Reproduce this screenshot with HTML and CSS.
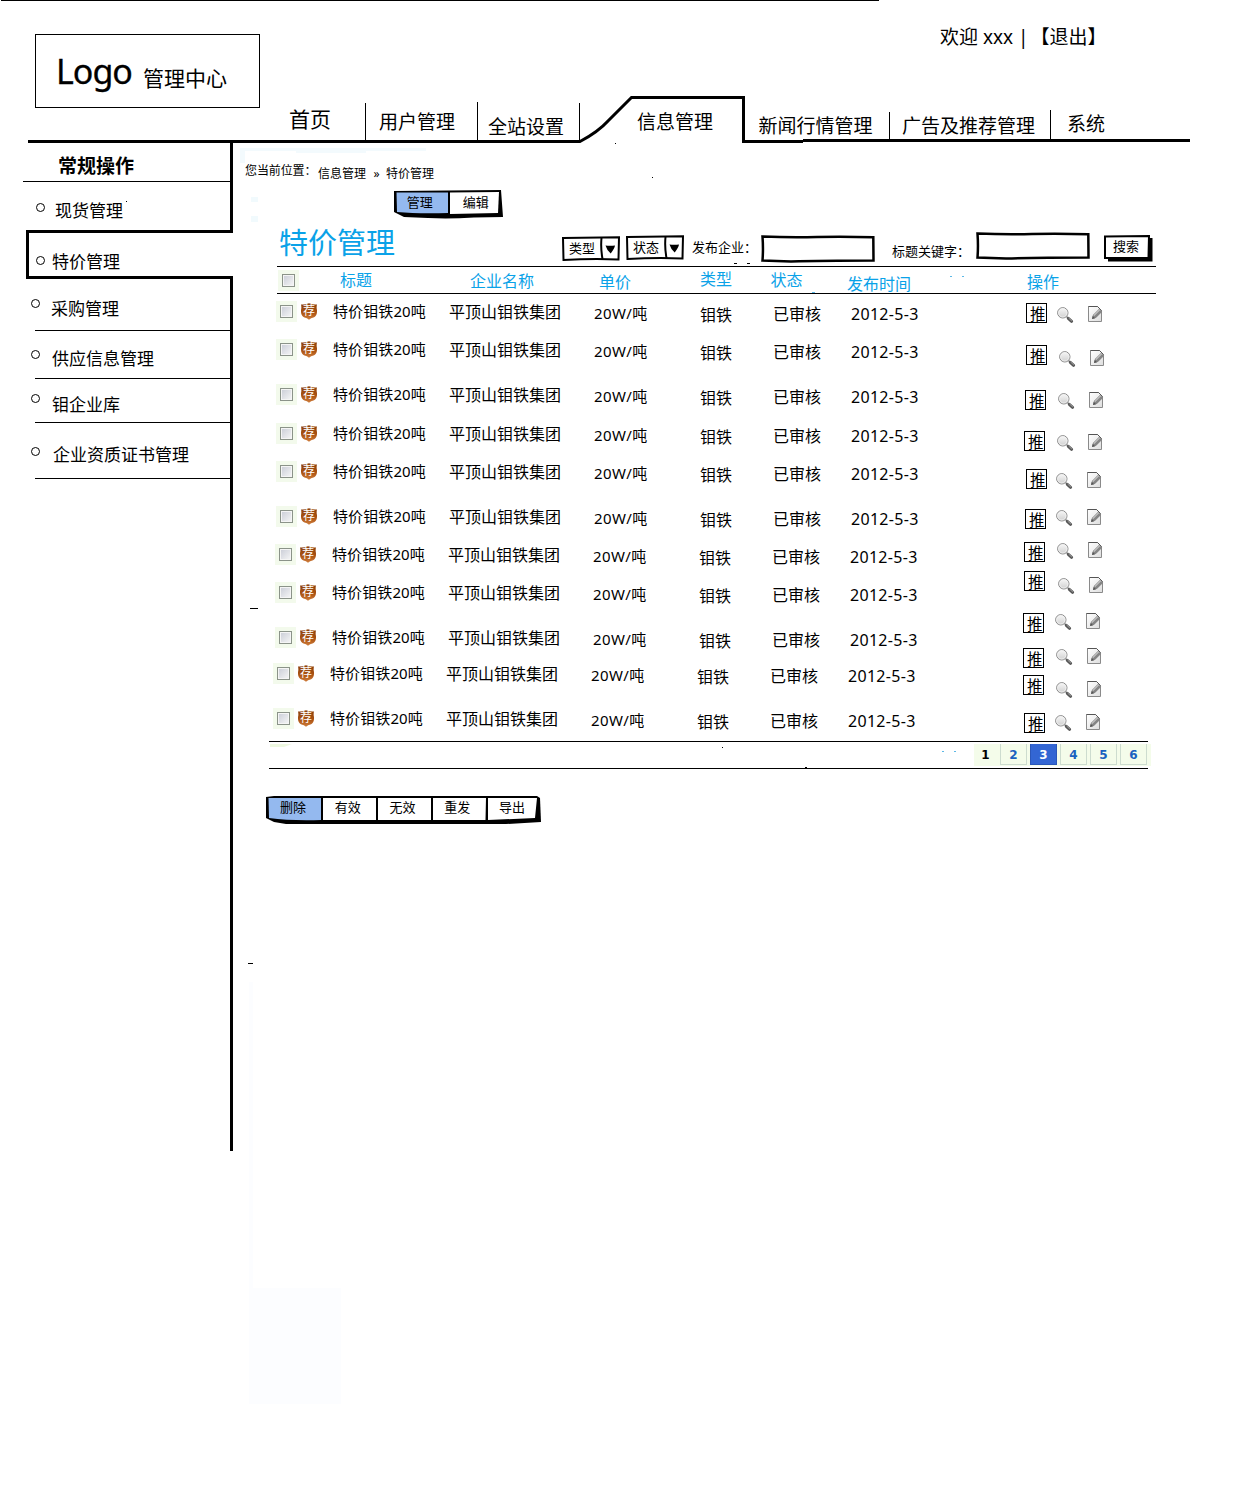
FILE: index.html
```html
<!DOCTYPE html>
<html lang="zh-CN">
<head>
<meta charset="utf-8">
<title>管理中心 - 特价管理</title>
<link rel="stylesheet" href="styles.css">
</head>
<body>
<svg class="defs" width="0" height="0" aria-hidden="true">
  <defs>
    <linearGradient id="lens" x1="0" y1="0" x2="0" y2="1"><stop offset="0" stop-color="#f8f8f8"/><stop offset="1" stop-color="#cfcfcf"/></linearGradient>
    <linearGradient id="paper" x1="0" y1="0" x2="1" y2="1"><stop offset="0" stop-color="#fff"/><stop offset="1" stop-color="#dedede"/></linearGradient>
    <linearGradient id="bronze" x1="0" y1="0" x2="0" y2="1"><stop offset="0" stop-color="#8a3f0c"/><stop offset=".6" stop-color="#ad5413"/><stop offset="1" stop-color="#d08040"/></linearGradient>
  </defs>
  <symbol id="view" viewBox="0 0 17 17">
    <path d="M9.5 9.500l2 2" stroke="#888" stroke-width="1.6"/>
    <path d="M11.3 11.300l3.300 3" stroke="#555" stroke-width="3" stroke-linecap="round"/>
    <path d="M11.8 11.200l2.800 2.600" stroke="#aaa" stroke-width=".9" stroke-linecap="round"/>
    <circle cx="5.800" cy="5.800" r="5.200" fill="url(#lens)" stroke="#8a8a8a"/>
    <circle cx="5.800" cy="5.800" r="4.200" fill="none" stroke="#f3f3f3" stroke-width=".8"/>
  </symbol>
  <symbol id="edit" viewBox="0 0 15 17">
    <path d="M.5 .5h9l4 4v11h-13z" fill="url(#paper)" stroke="#8a8a8a"/>
    <path d="M.5 .5h9l4 4" fill="none" stroke="#555"/>
    <path d="M4 13l.9-3.900 6.300-6.300 3 3-6.300 6.300z" fill="#858585"/>
    <path d="M5.800 9.700l6-6" stroke="#c5c5c5" stroke-width="1.2"/>
    <path d="M4 13l.7-3 2.400 2.300z" fill="#555"/>
  </symbol>
  <symbol id="shield" viewBox="0 0 16 17">
    <path d="M0 1.500Q4 2 8 .2Q12 2 16 1.500Q15.300 4 16 7Q16.400 13 12.500 14.600Q10 15.200 8 16.800Q6 15.200 3.500 14.600Q-.4 13 0 7Q.7 4 0 1.500z" fill="url(#bronze)"/>
  </symbol>
  <symbol id="dropdown" viewBox="0 0 58 25">
    <path d="M1 2L57 1.300L56.500 23.500Q30 22.500 1.500 24z" fill="#fff" stroke="#000" stroke-width="2"/>
    <path d="M39.500 2Q38.500 12 40.500 23" fill="none" stroke="#000" stroke-width="2"/>
    <path d="M43.500 9.500Q48 10.200 53 9.500Q52.500 12.500 48.700 17.500Q44.500 13.500 43.500 9.500z" fill="#000"/>
  </symbol>
  <symbol id="field" viewBox="0 0 114 28">
    <path d="M1.500 1.500Q30 2.800 56 2T112.300 2.300L112.500 25.500Q60 25.500 30 26.500L1.500 25.500Q2.400 14 1.500 1.500z" fill="#fff" stroke="#000" stroke-width="2.500"/>
  </symbol>
</svg>

<header class="header">
  <svg class="header-rule" width="1233" height="144" viewBox="0 0 1233 144" aria-hidden="true">
    <path d="M1 .5H879" stroke="#000"/>
    <path d="M28 141.500H580Q598 132 608 121Q618 111 631.500 97.500H743.500V141.500H803" fill="none" stroke="#000" stroke-width="3"/>
    <path d="M803 140.500H1190" stroke="#000" stroke-width="3"/>
  </svg>
  <div class="brand"><b class="brand-logo">Logo</b><span class="brand-name">管理中心</span></div>
  <div class="user">欢迎 xxx | <span>【退出】</span></div>
  <nav class="tabs">
    <a class="tab tab-home">首页</a>
    <a class="tab tab-users">用户管理</a>
    <a class="tab tab-site">全站设置</a>
    <a class="tab tab-info">信息管理</a>
    <a class="tab tab-news">新闻行情管理</a>
    <a class="tab tab-ads">广告及推荐管理</a>
    <a class="tab tab-system">系统</a>
  </nav>
</header>

<div class="body">
  <aside class="side">
    <h2 class="side-title">常规操作</h2>
    <ul class="menu">
      <li><i></i><a>现货管理</a></li>
      <li class="current"><i></i><a>特价管理</a></li>
      <li><i></i><a>采购管理</a></li>
      <li><i></i><a>供应信息管理</a></li>
      <li><i></i><a>钼企业库</a></li>
      <li><i></i><a>企业资质证书管理</a></li>
    </ul>
  </aside>

  <main class="main">
    <div class="crumbs"><span class="crumb-label">您当前位置：</span><span class="crumb">信息管理</span><span class="crumb-sep">»</span><span class="crumb">特价管理</span></div>

    <div class="group group-top">
      <svg class="frame" width="109" height="29" viewBox="0 0 109 29" aria-hidden="true">
        <path d="M0 1L107 0L109 27L80 27.500Q55 29 34 28L10 27L0 22z" fill="#000"/>
        <path d="M2.500 2.500H54V23Q25 24 3 22z" fill="#94b9ef"/>
        <path d="M56 2.500L105 2L104 23L56 24z" fill="#fff"/>
      </svg>
      <span class="cell">管理</span><span class="cell">编辑</span>
    </div>

    <div class="heading">
      <h1 class="title">特价管理</h1>
      <div class="select select-type"><svg class="frame" width="58" height="25"><use href="#dropdown"/></svg><span>类型</span></div>
      <div class="select select-state"><svg class="frame" width="58" height="25"><use href="#dropdown"/></svg><span>状态</span></div>
      <label class="label-company">发布企业：</label>
      <svg class="field field-company" width="114" height="28"><use href="#field"/></svg>
      <label class="label-keyword">标题关键字：</label>
      <svg class="field field-keyword" width="114" height="28"><use href="#field"/></svg>
      <button class="search"><svg class="frame" width="49" height="27" viewBox="0 0 49 27"><path d="M4 3H48.500V26.500H4z"/><path d="M1 1.500L45 1L44.500 23H1z" fill="#fff" stroke="#000" stroke-width="2"/></svg><span>搜索</span></button>
    </div>

    <div class="thead">
      <span class="check"></span><span>标题</span><span>企业名称</span><span>单价</span><span>类型</span><span>状态</span><span>发布时间</span><span>操作</span>
    </div>

    <div class="tbody">
      <div class="rows">
        <div class="row"><span class="check"></span><span class="badge"><svg class="frame" width="16" height="17"><use href="#shield"/></svg><em>荐</em></span><span>特价钼铁20吨</span><span>平顶山钼铁集团</span><span>20W/吨</span><span>钼铁</span><span>已审核</span><span>2012-5-3</span></div>
        <div class="row"><span class="check"></span><span class="badge"><svg class="frame" width="16" height="17"><use href="#shield"/></svg><em>荐</em></span><span>特价钼铁20吨</span><span>平顶山钼铁集团</span><span>20W/吨</span><span>钼铁</span><span>已审核</span><span>2012-5-3</span></div>
        <div class="row"><span class="check"></span><span class="badge"><svg class="frame" width="16" height="17"><use href="#shield"/></svg><em>荐</em></span><span>特价钼铁20吨</span><span>平顶山钼铁集团</span><span>20W/吨</span><span>钼铁</span><span>已审核</span><span>2012-5-3</span></div>
        <div class="row"><span class="check"></span><span class="badge"><svg class="frame" width="16" height="17"><use href="#shield"/></svg><em>荐</em></span><span>特价钼铁20吨</span><span>平顶山钼铁集团</span><span>20W/吨</span><span>钼铁</span><span>已审核</span><span>2012-5-3</span></div>
        <div class="row"><span class="check"></span><span class="badge"><svg class="frame" width="16" height="17"><use href="#shield"/></svg><em>荐</em></span><span>特价钼铁20吨</span><span>平顶山钼铁集团</span><span>20W/吨</span><span>钼铁</span><span>已审核</span><span>2012-5-3</span></div>
        <div class="row"><span class="check"></span><span class="badge"><svg class="frame" width="16" height="17"><use href="#shield"/></svg><em>荐</em></span><span>特价钼铁20吨</span><span>平顶山钼铁集团</span><span>20W/吨</span><span>钼铁</span><span>已审核</span><span>2012-5-3</span></div>
        <div class="row"><span class="check"></span><span class="badge"><svg class="frame" width="16" height="17"><use href="#shield"/></svg><em>荐</em></span><span>特价钼铁20吨</span><span>平顶山钼铁集团</span><span>20W/吨</span><span>钼铁</span><span>已审核</span><span>2012-5-3</span></div>
        <div class="row"><span class="check"></span><span class="badge"><svg class="frame" width="16" height="17"><use href="#shield"/></svg><em>荐</em></span><span>特价钼铁20吨</span><span>平顶山钼铁集团</span><span>20W/吨</span><span>钼铁</span><span>已审核</span><span>2012-5-3</span></div>
        <div class="row"><span class="check"></span><span class="badge"><svg class="frame" width="16" height="17"><use href="#shield"/></svg><em>荐</em></span><span>特价钼铁20吨</span><span>平顶山钼铁集团</span><span>20W/吨</span><span>钼铁</span><span>已审核</span><span>2012-5-3</span></div>
        <div class="row"><span class="check"></span><span class="badge"><svg class="frame" width="16" height="17"><use href="#shield"/></svg><em>荐</em></span><span>特价钼铁20吨</span><span>平顶山钼铁集团</span><span>20W/吨</span><span>钼铁</span><span>已审核</span><span>2012-5-3</span></div>
        <div class="row"><span class="check"></span><span class="badge"><svg class="frame" width="16" height="17"><use href="#shield"/></svg><em>荐</em></span><span>特价钼铁20吨</span><span>平顶山钼铁集团</span><span>20W/吨</span><span>钼铁</span><span>已审核</span><span>2012-5-3</span></div>
      </div>
      <div class="ops">
        <div class="op"><span class="push">推</span><svg class="view" width="17" height="17"><use href="#view"/></svg><svg class="edit" width="15" height="17"><use href="#edit"/></svg></div>
        <div class="op"><span class="push">推</span><svg class="view" width="17" height="17"><use href="#view"/></svg><svg class="edit" width="15" height="17"><use href="#edit"/></svg></div>
        <div class="op"><span class="push">推</span><svg class="view" width="17" height="17"><use href="#view"/></svg><svg class="edit" width="15" height="17"><use href="#edit"/></svg></div>
        <div class="op"><span class="push">推</span><svg class="view" width="17" height="17"><use href="#view"/></svg><svg class="edit" width="15" height="17"><use href="#edit"/></svg></div>
        <div class="op"><span class="push">推</span><svg class="view" width="17" height="17"><use href="#view"/></svg><svg class="edit" width="15" height="17"><use href="#edit"/></svg></div>
        <div class="op"><span class="push">推</span><svg class="view" width="17" height="17"><use href="#view"/></svg><svg class="edit" width="15" height="17"><use href="#edit"/></svg></div>
        <div class="op"><span class="push">推</span><svg class="view" width="17" height="17"><use href="#view"/></svg><svg class="edit" width="15" height="17"><use href="#edit"/></svg></div>
        <div class="op"><span class="push">推</span><svg class="view" width="17" height="17"><use href="#view"/></svg><svg class="edit" width="15" height="17"><use href="#edit"/></svg></div>
        <div class="op"><span class="push">推</span><svg class="view" width="17" height="17"><use href="#view"/></svg><svg class="edit" width="15" height="17"><use href="#edit"/></svg></div>
        <div class="op"><span class="push">推</span><svg class="view" width="17" height="17"><use href="#view"/></svg><svg class="edit" width="15" height="17"><use href="#edit"/></svg></div>
        <div class="op"><span class="push">推</span><svg class="view" width="17" height="17"><use href="#view"/></svg><svg class="edit" width="15" height="17"><use href="#edit"/></svg></div>
        <div class="op"><span class="push">推</span><svg class="view" width="17" height="17"><use href="#view"/></svg><svg class="edit" width="15" height="17"><use href="#edit"/></svg></div>
      </div>
    </div>

    <div class="tfoot">
      <div class="pages"><b>1</b><a>2</a><a class="on">3</a><a>4</a><a>5</a><a>6</a></div>
    </div>

    <div class="group group-bottom">
      <svg class="frame" width="275" height="29" viewBox="0 0 275 29" aria-hidden="true">
        <path d="M0 1L8 0H271L274 2L275 26L240 28H20L8 26L0 22z" fill="#000"/>
        <path d="M2.500 2H55V24Q25 25 3 22z" fill="#94b9ef"/>
        <path d="M57 2H110V24H57zM112 2H165V24H112zM167 2H220L219.500 24H167zM222 2H271L269 22L222 24z" fill="#fff"/>
      </svg>
      <span class="cell">删除</span><span class="cell">有效</span><span class="cell">无效</span><span class="cell">重发</span><span class="cell">导出</span>
    </div>
  </main>
</div>

<svg class="marks" width="1233" height="1498" viewBox="0 0 1233 1498" aria-hidden="true">
  <path d="M240 148h186v3h-60v2h-70v-2h-51v12h-5z" fill="#f3fafd"/>
  <path d="M251 197h7v5h-7zM251 216h7v6h-7z" fill="#f1fafd"/>
  <path d="M249 1288h92v116h-92zM249 982h4v306h-4z" fill="#fcfdff"/>
  <path d="M270 744h22l-8 3h-14z" fill="#eef8e0"/>
  <path d="M250 608.500h8M248 963.500h5M734 263.500h3M747 263.500h3M615 143.500h1M652 177.500h1M722 747.500h1M126 201.500h1M805 767.500h2" stroke="#000"/>
  <path d="M950 276.500h2M962 276.500h2M812 292.500h3M942 751.500h2M954 751.500h2" stroke="#5bb8e6"/>
</svg>
</body>
</html>
```
FILE: styles.css
```css
* { box-sizing: border-box; }

body {
  margin: 0;
  width: 1233px;
  height: 1498px;
  position: relative;
  overflow: hidden;
  background: #fff;
  color: #000;
  font: 16px/20px "Noto Sans", "Noto Sans CJK SC", sans-serif;
  white-space: nowrap;
}

.defs { position: absolute; }
svg { display: block; }
h1, h2, ul { margin: 0; padding: 0; font-weight: normal; list-style: none; }
i, em { font-style: normal; }

/* drawn outlines sit behind the text of their control */
.frame { position: absolute; left: 0; top: 0; z-index: -1; overflow: visible; }
.marks { position: absolute; left: 0; top: 0; z-index: -1; }

/* header */
.header {
  position: relative;
  height: 143px;
  padding-left: 35px;
  display: grid;
  grid-template-columns: 225px 1fr;
  grid-template-rows: 95px 45px;
}
.header-rule { position: absolute; left: 0; top: 0; }
.brand {
  grid-row: 1 / 3;
  height: 74px;
  margin-top: 34px;
  padding-left: 20px;
  border: 1px solid #000;
  display: flex;
}
.brand-logo { width: 87px; padding-top: 16px; font-size: 34px; line-height: 40px; font-weight: 400; letter-spacing: -1px; -webkit-text-stroke: .3px #000; }
.brand-name { padding-top: 28px; font-size: 21px; line-height: 30px; }
.user { margin: 23px 0 0 680px; font-size: 19px; line-height: 28px; }
.user span { margin-left: -3px; }

.tabs { grid-column: 2; display: flex; align-items: flex-end; }
.tab { font-size: 19px; line-height: 28px; border-right: 1px solid #000; }
.tab-home { width: 106px; height: 37px; padding: 2px 0 0 29px; font-size: 21px; }
.tab-users { width: 112px; height: 38px; padding: 6px 0 0 13px; }
.tab-site { width: 102px; height: 37px; padding: 10px 0 0 10px; }
.tab-info { width: 166px; height: 45px; padding: 13px 0 0 57px; border: 0; }
.tab-news { width: 144px; height: 28px; padding-left: 12.500px; }
.tab-ads { width: 161px; height: 30px; padding: 2px 0 0 12px; }
.tab-system { height: 30px; padding-left: 16px; border: 0; }

/* page body */
.body { display: flex; align-items: flex-start; padding-left: 23px; }

.side { width: 210px; height: 1008px; border-right: 3px solid #000; }
.side-title {
  height: 39px;
  padding: 8px 0 0 35px;
  border-bottom: 1px solid #000;
  font-size: 19px;
  line-height: 30px;
  font-weight: 700;
}
.menu li {
  display: flex;
  align-items: flex-start;
  margin-left: 12px;
  border-bottom: 1px solid #000;
  font-size: 17px;
}
.menu i { width: 9px; height: 9px; margin-left: -4px; border: 1px solid #000; border-radius: 50%; }
.menu a { margin-left: 12px; }
.menu li:nth-child(1) { height: 48px; border: 0; padding-top: 19px; }
.menu li:nth-child(1) i { margin: 2px 0 0 1px; }
.menu li:nth-child(1) a { margin-left: 10px; }
.menu .current {
  height: 49px;
  margin: 0 -3px 0 3px;
  padding-top: 19px;
  border: 3px solid #000;
  border-right: 0;
  background: #fff;
}
.menu .current i { margin: 4px 0 0 7px; }
.menu .current a { margin-left: 7px; }
.menu li:nth-child(3) { height: 52px; padding-top: 20px; }
.menu li:nth-child(3) a { margin-left: 11px; }
.menu li:nth-child(4) { height: 48px; padding-top: 18px; }
.menu li:nth-child(4) i { margin-top: 1px; }
.menu li:nth-child(5) { height: 44px; padding-top: 15px; }
.menu li:nth-child(5) a { margin-top: 1px; }
.menu li:nth-child(6) { height: 56px; padding-top: 22px; }
.menu li:nth-child(6) i { margin-top: 2px; }
.menu li:nth-child(6) a { margin-left: 13px; }

.main { width: 1000px; }

.crumbs { display: flex; height: 20px; margin: 18px 0 0 12px; font-size: 12px; }
.crumb-label { width: 73px; letter-spacing: -.1px; }
.crumb, .crumb-sep { padding-top: 3px; }
.crumb-sep { width: 20px; padding-left: 1px; text-align: center; }

.group { position: relative; display: flex; font-size: 13px; line-height: 24px; }
.cell { width: 54.800px; text-align: center; }
.group-top { width: 109px; height: 29px; margin: 9px 0 0 161px; }
.group-top .cell:first-of-type { padding-right: 3px; }
.group-bottom { width: 275px; height: 29px; margin: 27px 0 0 33px; line-height: 23px; }
.group-bottom .cell { padding-right: 1px; }

.heading { display: flex; align-items: flex-start; height: 47px; font-size: 13px; }
.title { width: 283px; margin: 6px 0 0 46px; font-size: 29px; line-height: 36px; color: #0aa2e8; }
.select { position: relative; width: 58px; height: 25px; padding-left: 7px; line-height: 24px; }
.select-type { margin-top: 17px; }
.select-state { margin: 16px 0 0 6px; }
.label-company { width: 69px; margin: 18px 0 0 8px; }
.field-company { margin-top: 16px; }
.label-keyword { width: 84px; margin: 22px 0 0 17px; }
.field-keyword { margin-top: 13px; }
.search {
  position: relative;
  width: 49px;
  height: 27px;
  margin: 16px 0 0 14px;
  padding: 0 5px 0 0;
  border: 0;
  background: none;
  color: #000;
  font: inherit;
  line-height: 23px;
}
.search span { display: block; height: 27px; }

.thead, .row { display: grid; align-items: start; }
.thead {
  width: 879px;
  height: 28px;
  margin-left: 44px;
  grid-template-columns: 63px 130px 129px 101px 70.500px 76.500px 180px 60px;
  border-top: 1px solid #000;
  border-bottom: 1px solid #000;
  color: #0aa2e8;
}
.thead span:nth-child(2) { padding-top: 3px; }
.thead span:nth-child(3) { padding-top: 4px; }
.thead span:nth-child(4) { padding-top: 5px; }
.thead span:nth-child(5) { padding-top: 2px; }
.thead span:nth-child(6) { padding-top: 3px; }
.thead span:nth-child(7) { padding-top: 7px; }
.thead span:nth-child(8) { padding-top: 5px; }

.check {
  width: 13px;
  height: 13px;
  border: 1px solid #8b9389;
  background: linear-gradient(135deg, #c9ccd6, #f7f7f7);
  box-shadow: inset 0 0 0 1px #f5f5f5, 0 0 0 4px #f3faec;
}
.thead .check { margin: 7px 0 0 5px; }
.row .check { margin: 3px 0 0 4px; }

.tbody { display: flex; height: 447px; margin-left: 43px; }
.rows { width: 744px; padding-top: 8px; }
.row {
  height: 38px;
  grid-template-columns: 25px 32px 116px 145px 106px 73px 78px 1fr;
}
.row:nth-child(2), .row:nth-child(5), .row:nth-child(8), .row:nth-child(10) { height: 45px; }
.row:nth-child(3) { height: 39px; }
.row:nth-child(9) { height: 36px; }
.row:nth-child(n+7) { margin-left: -1px; }
.row:nth-child(n+10) { margin-left: -3px; }
.badge {
  position: relative;
  width: 16px;
  height: 17px;
  margin-top: 1px;
  color: #fff;
  font-size: 12px;
  line-height: 16px;
}
.badge em { display: block; width: 16px; padding-left: 2px; }
.row span:nth-child(3) { margin-top: -1px; font-size: 15px; letter-spacing: .1px; }
.row span:nth-child(5) { padding-top: 1px; font-size: 15px; letter-spacing: .4px; }
.row span:nth-child(6) { padding-top: 3px; }
.row span:nth-child(7) { padding-top: 2px; }
.row span:nth-child(8) { padding-top: 2px; letter-spacing: .3px; }

/* action column keeps its own rhythm, independent of the data rows */
.ops { padding-top: 9px; }
.op { --x: 6px; --gap: 10px; --drop: 4px; display: flex; align-items: flex-start; height: 42px; padding-left: var(--x); }
.push { width: 21px; height: 20px; padding-left: 3px; border: 1px solid #000; font-size: 15.500px; line-height: 21px; }
.view { margin: var(--drop) 14px 0 var(--gap); }
.edit { margin-top: calc(var(--drop) - 1px); }
.op:nth-child(2) { --gap: 12px; --drop: 6px; height: 45px; }
.op:nth-child(3) { --x: 5px; --gap: 12px; --drop: 3px; height: 41px; }
.op:nth-child(4) { --x: 4px; --gap: 12px; height: 38px; }
.op:nth-child(5) { --gap: 9px; height: 40px; }
.op:nth-child(6) { --x: 5px; --drop: 1px; height: 33px; }
.op:nth-child(7) { --x: 4px; --gap: 12px; --drop: 1px; height: 29px; }
.op:nth-child(8) { --x: 4px; --gap: 13px; --drop: 7px; height: 42px; }
.op:nth-child(9) { --x: 3px; --gap: 11px; --drop: 1px; height: 35px; }
.op:nth-child(10) { --x: 3px; --gap: 12px; --drop: 1px; height: 27px; }
.op:nth-child(11) { --x: 3px; --gap: 12px; --drop: 7px; height: 38px; }
.op:nth-child(12) { --x: 4px; --drop: 2px; height: 20px; }

.tfoot {
  width: 879px;
  height: 28px;
  margin-left: 36px;
  padding-top: 2px;
  border-top: 1px solid #000;
  border-bottom: 1px solid #000;
  display: flex;
}
.pages {
  display: flex;
  gap: 3px;
  width: 177px;
  height: 22px;
  margin: 0 -3px 0 auto;
  background: #f4fcea;
  font: bold 12px/22px "DejaVu Sans", sans-serif;
  text-align: center;
}
.pages b { width: 23px; }
.pages a { width: 27px; height: 21px; border: 1px solid #cddccf; border-top: 0; color: #1a62c0; }
.pages .on { background: #3366d3; border-color: #2b57b8; color: #fff; }
```
